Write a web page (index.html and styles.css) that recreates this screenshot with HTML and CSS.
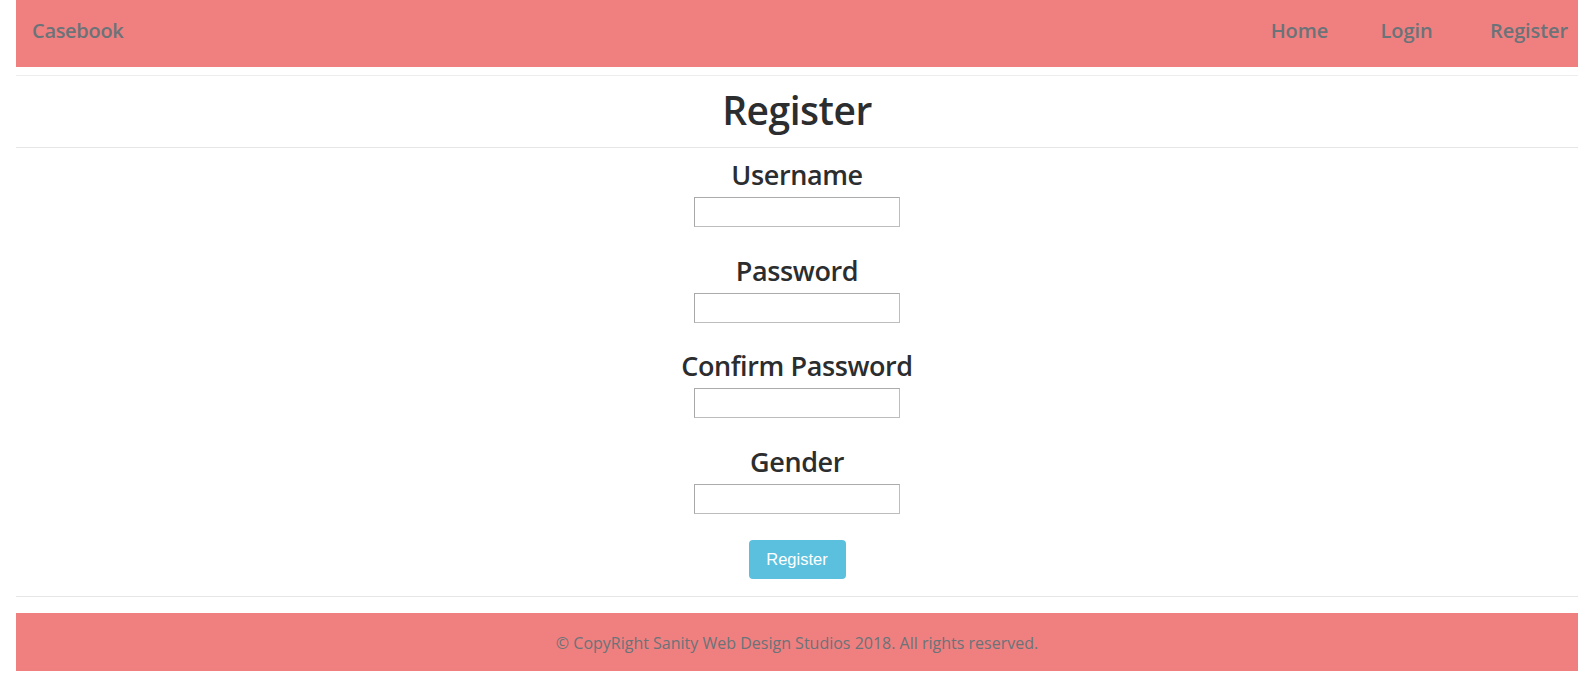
FILE: index.html
```html
<!DOCTYPE html>
<html lang="en">
<head>
<meta charset="utf-8">
<title>Casebook - Register</title>
<link rel="stylesheet" href="styles.css">
</head>
<body>
<div class="page">
  <header class="navbar">
    <a class="brand" href="#">Casebook</a>
    <nav class="nav">
      <a class="nav-link link-home" href="#">Home</a>
      <a class="nav-link link-login" href="#">Login</a>
      <a class="nav-link link-register" href="#">Register</a>
    </nav>
  </header>
  <hr class="rule rule-top">
  <h1 class="title">Register</h1>
  <hr class="rule rule-title">
  <form class="form">
    <div class="group">
      <label class="label" for="username">Username</label>
      <input class="field" id="username" type="text">
    </div>
    <div class="group">
      <label class="label" for="password">Password</label>
      <input class="field" id="password" type="password">
    </div>
    <div class="group">
      <label class="label" for="confirm">Confirm Password</label>
      <input class="field" id="confirm" type="password">
    </div>
    <div class="group">
      <label class="label" for="gender">Gender</label>
      <input class="field" id="gender" type="text">
    </div>
    <button class="btn" type="button">Register</button>
  </form>
  <hr class="rule rule-bottom">
  <footer class="footer">© CopyRight Sanity Web Design Studios 2018. All rights reserved.</footer>
</div>
</body>
</html>
```
FILE: styles.css
```css
html, body {
  margin: 0;
  padding: 0;
  background: #ffffff;
}

body {
  font-family: "Open Sans", "Noto Sans", sans-serif;
  color: #212529;
}

.page {
  margin: 0 14px 0 16px;
  display: flex;
  flex-direction: column;
}

.navbar {
  background: #f08080;
  height: 67px;
  display: flex;
  align-items: center;
  justify-content: space-between;
  padding: 0 10px 0 16px;
  box-sizing: border-box;
}

.brand,
.nav-link {
  color: #6a7378;
  text-decoration: none;
  font-size: 20px;
  font-weight: 600;
  line-height: 24px;
  margin-top: -6px;
}

.brand {
  letter-spacing: -0.3px;
}

.nav-link {
  letter-spacing: -0.1px;
}

.nav {
  display: flex;
}

.link-login {
  margin-left: 52.5px;
}

.link-register {
  margin-left: 57.5px;
}

.rule {
  border: 0;
  margin: 0;
  height: 1px;
}

.rule-top {
  margin-top: 8px;
  background: #ededed;
}

.title {
  margin: 0;
  text-align: center;
  font-size: 39px;
  font-weight: 600;
  letter-spacing: -0.5px;
  line-height: 48px;
  padding: 10px 0 13px;
  color: #2b2d2f;
}

.rule-title {
  background: #e6e6e6;
}

.form {
  display: flex;
  flex-direction: column;
  align-items: center;
  padding-top: 10px;
}

.group {
  display: flex;
  flex-direction: column;
  align-items: center;
  margin-bottom: 26.67px;
}

.label {
  font-size: 27px;
  font-weight: 600;
  letter-spacing: -0.4px;
  line-height: 34px;
  margin-bottom: 5px;
  color: #2b2d2f;
}

.field {
  width: 206px;
  height: 30px;
  box-sizing: border-box;
  border: 1px solid #bdbdbd;
  border-left-color: #a8a8a8;
  border-top-color: #ababab;
  background: #ffffff;
  margin: 0;
  padding: 2px 4px;
}

.btn {
  margin-top: -1px;
  width: 97px;
  height: 39px;
  border: 0;
  border-radius: 4px;
  background: #5bc0de;
  color: #ffffff;
  font-family: "Liberation Sans", Arial, sans-serif;
  font-size: 16.5px;
  padding: 0;
}

.rule-bottom {
  margin-top: 17px;
  background: #e6e6e6;
}

.footer {
  margin-top: 16px;
  background: #f08080;
  height: 58px;
  display: flex;
  align-items: center;
  justify-content: center;
  color: #6a7378;
  font-size: 16px;
  padding-top: 2px;
  box-sizing: border-box;
}
```
